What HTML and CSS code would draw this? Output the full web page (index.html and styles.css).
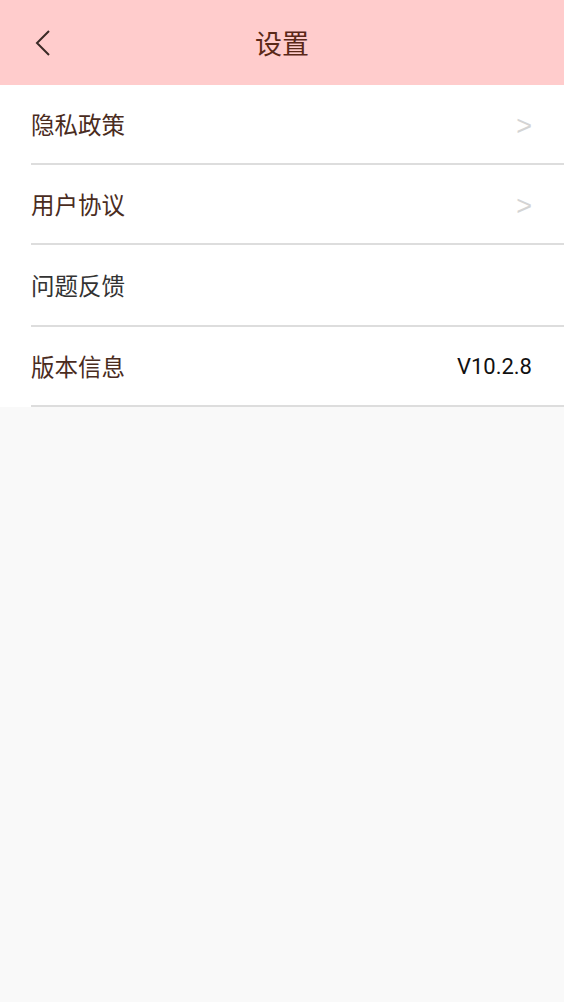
FILE: index.html
```html
<!DOCTYPE html>
<html lang="zh-CN">
<head>
    <meta charset="UTF-8">
    <meta name="viewport" content="width=device-width, initial-scale=1.0">
    <title>设置</title>
    <link rel="stylesheet" href="styles.css">
</head>
<body>
    <div class="header">
        <a class="back" href="#">
            <svg width="20" height="30" viewBox="0 0 20 30">
                <polyline points="15,4 3,16 15,28" fill="none" stroke="#3a2a26" stroke-width="2"/>
            </svg>
        </a>
        <h1>设置</h1>
    </div>

    <ul class="list">
        <li class="item">
            <div class="item-inner">
                <span class="label">隐私政策</span>
                <span class="arrow">&gt;</span>
            </div>
        </li>
        <li class="item">
            <div class="item-inner">
                <span class="label">用户协议</span>
                <span class="arrow">&gt;</span>
            </div>
        </li>
        <li class="item">
            <div class="item-inner item-tall">
                <span class="label label-dark">问题反馈</span>
            </div>
        </li>
        <li class="item">
            <div class="item-inner">
                <span class="label">版本信息</span>
                <span class="version">V10.2.8</span>
            </div>
        </li>
    </ul>
</body>
</html>
```

FILE: styles.css
```css
* {
    margin: 0;
    padding: 0;
    box-sizing: border-box;
}

body {
    background-color: #f9f9f9;
    font-family: "Noto Sans CJK SC", "Noto Sans", sans-serif;
    color: #4a2c1e;
}

ul li {
    list-style: none;
}

.header {
    position: relative;
    height: 85px;
    background-color: #ffcccc;
    display: flex;
    align-items: center;
    justify-content: center;
}

.header h1 {
    font-size: 27px;
    font-weight: normal;
    color: #5a2818;
}

.back {
    position: absolute;
    left: 34px;
    top: 27px;
    display: block;
    width: 20px;
    height: 30px;
}

.back svg {
    display: block;
}

.item {
    background-color: #fff;
    padding-left: 31px;
}

.item-inner {
    height: 80px;
    padding-right: 32px;
    border-bottom: 2px solid #dddddd;
    display: flex;
    align-items: center;
    justify-content: space-between;
}

.item-tall {
    height: 82px;
}

.label {
    font-size: 23.5px;
    color: #4a2c1e;
}

.label-dark {
    color: #333;
}

.arrow {
    font-family: "Liberation Sans", sans-serif;
    font-size: 27px;
    color: #d4d4d4;
    margin-top: 4px;
}

.version {
    font-family: Roboto, sans-serif;
    font-size: 22px;
    color: #111;
}
```
